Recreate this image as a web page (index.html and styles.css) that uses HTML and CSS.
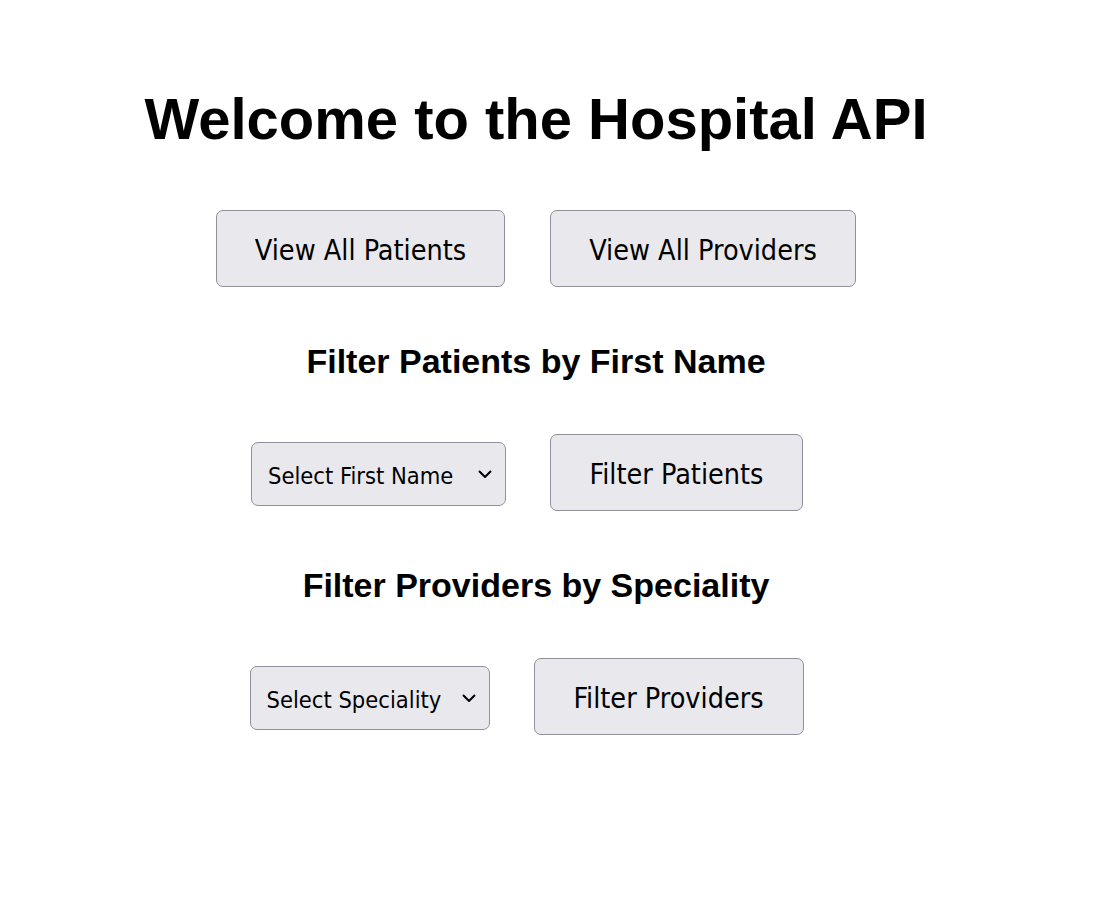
FILE: index.html
```html
<!DOCTYPE html>
<html lang="en">
<head>
<meta charset="utf-8">
<title>Hospital API</title>
<link rel="stylesheet" href="styles.css">
</head>
<body>
<main class="page">
  <h1 class="title">Welcome to the Hospital API</h1>
  <div class="row row-main">
    <button class="btn btn-patients">View All Patients</button>
    <button class="btn btn-providers">View All Providers</button>
  </div>
  <h2 class="subtitle">Filter Patients by First Name</h2>
  <div class="row row-filter">
    <select class="select select-name">
      <option>Select First Name</option>
    </select>
    <button class="btn btn-filter-patients">Filter Patients</button>
  </div>
  <h2 class="subtitle">Filter Providers by Speciality</h2>
  <div class="row row-filter row-providers">
    <select class="select select-spec">
      <option>Select Speciality</option>
    </select>
    <button class="btn btn-filter-providers">Filter Providers</button>
  </div>
</main>
</body>
</html>
```

FILE: styles.css
```css
html, body {
  margin: 0;
  padding: 0;
  background: #ffffff;
}

.page {
  width: 1072px;
  display: flex;
  flex-direction: column;
  align-items: center;
  font-family: "Liberation Sans", Arial, sans-serif;
  color: #000;
}

.title {
  margin: 85px 0 0;
  font-size: 58px;
  font-weight: bold;
  line-height: 67px;
}

.subtitle {
  margin: 55px 0 0;
  font-size: 34px;
  font-weight: bold;
  line-height: 39px;
}

.row {
  display: flex;
  align-items: center;
  gap: 44px;
  margin-top: 53px;
}

.row-main {
  margin-top: 58px;
  gap: 45px;
}

.row-filter {
  margin-right: 18px;
}

.btn {
  height: 77px;
  box-sizing: border-box;
  background: #e9e9ed;
  border: 1px solid #8f8f9d;
  border-radius: 7px;
  font-family: "DejaVu Sans Condensed", "DejaVu Sans", sans-serif;
  font-size: 28.5px;
  color: #000;
  padding: 3px 0 0;
  text-align: center;
}

.btn-patients { width: 289px; }
.btn-providers { width: 306px; }
.btn-filter-patients { width: 253px; }
.btn-filter-providers { width: 270px; }

.select {
  appearance: none;
  -webkit-appearance: none;
  height: 64px;
  margin-top: 2px;
  box-sizing: border-box;
  background-color: #e9e9ed;
  background-image: url("data:image/svg+xml;utf8,<svg xmlns='http://www.w3.org/2000/svg' width='14' height='8' viewBox='0 0 14 8'><path d='M1 1 L7 7 L13 1' fill='none' stroke='black' stroke-width='2'/></svg>");
  background-repeat: no-repeat;
  background-position: right 13px center;
  border: 1px solid #8f8f9d;
  border-radius: 7px;
  font-family: "DejaVu Sans Condensed", "DejaVu Sans", sans-serif;
  font-size: 23.5px;
  color: #000;
  padding: 4px 0 0 16px;
}

.select-name { width: 255px; }
.select-spec { width: 240px; }

.row-providers .select { margin-left: -1px; }
```
